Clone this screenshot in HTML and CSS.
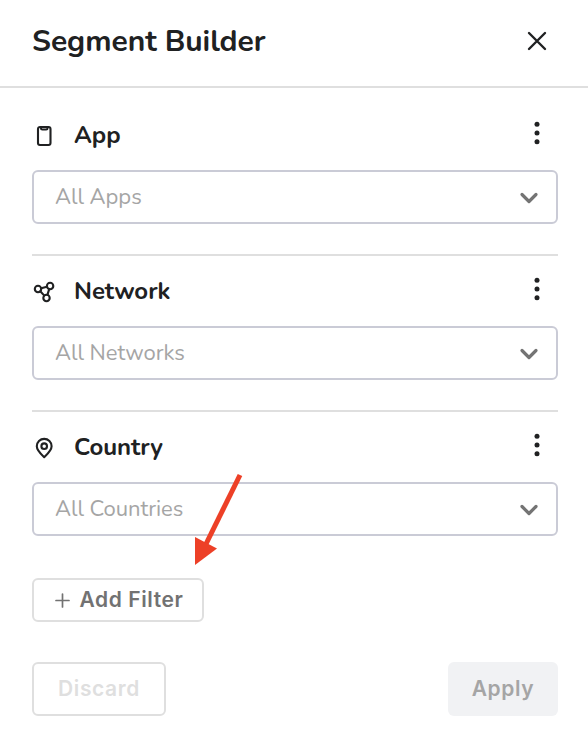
FILE: index.html
```html
<!DOCTYPE html>
<html lang="en">
<head>
<meta charset="utf-8">
<title>Segment Builder</title>
<link rel="stylesheet" href="styles.css">
</head>
<body>
<main class="panel">
  <header class="header">
    <h1 class="title">Segment Builder</h1>
    <svg class="close" width="22" height="22" viewBox="0 0 22 22"><path d="M3 3 19 19M19 3 3 19"/></svg>
  </header>
  <div class="filters">
    <section class="filter">
      <div class="filter-head">
        <svg class="icon" width="24" height="24" viewBox="0 0 24 24"><rect x="6" y="3" width="12.500" height="18" rx="2"/><path d="M9 3v1.200q0 1.300 1.300 1.300h3.900q1.300 0 1.300-1.300V3"/></svg>
        <h2 class="name">App</h2>
        <svg class="more" width="8" height="24" viewBox="0 0 8 24"><circle cx="4" cy="3.3" r="2.5"/><circle cx="4" cy="12" r="2.5"/><circle cx="4" cy="20.7" r="2.5"/></svg>
      </div>
      <div class="select"><span>All Apps</span><svg class="chevron" width="20" height="14" viewBox="0 0 20 14"><path d="m3 3.5 7 7 7-7"/></svg></div>
    </section>
    <section class="filter">
      <div class="filter-head">
        <svg class="icon" width="24" height="24" viewBox="0 0 24 24"><circle cx="6" cy="9" r="3.2"/><circle cx="18.1" cy="6" r="3.2"/><circle cx="14.5" cy="18" r="3.2"/><path d="m9.2 8.300 5.700-1.500M8.300 11.300l4 4.300M17.200 9.100l-1.800 5.800"/></svg>
        <h2 class="name">Network</h2>
        <svg class="more" width="8" height="24" viewBox="0 0 8 24"><circle cx="4" cy="3.3" r="2.5"/><circle cx="4" cy="12" r="2.5"/><circle cx="4" cy="20.7" r="2.5"/></svg>
      </div>
      <div class="select"><span>All Networks</span><svg class="chevron" width="20" height="14" viewBox="0 0 20 14"><path d="m3 3.5 7 7 7-7"/></svg></div>
    </section>
    <section class="filter">
      <div class="filter-head">
        <svg class="icon" width="24" height="24" viewBox="0 0 24 24"><path d="M12.2 21.2C9 18.2 4.8 14.5 4.8 10.300a7.400 7.400 0 0 1 14.800 0c0 4.200-4.200 7.900-7.400 10.900Z"/><circle cx="12.2" cy="10.2" r="2.8"/></svg>
        <h2 class="name">Country</h2>
        <svg class="more" width="8" height="24" viewBox="0 0 8 24"><circle cx="4" cy="3.3" r="2.5"/><circle cx="4" cy="12" r="2.5"/><circle cx="4" cy="20.7" r="2.5"/></svg>
      </div>
      <div class="select"><span>All Countries</span><svg class="chevron" width="20" height="14" viewBox="0 0 20 14"><path d="m3 3.5 7 7 7-7"/></svg></div>
    </section>
  </div>
  <button class="button add"><svg class="plus" width="16" height="16" viewBox="0 0 16 16"><path d="M2 7.500h13M8.500 1v13"/></svg><span>Add Filter</span></button>
  <footer class="actions">
    <button class="button discard">Discard</button>
    <button class="button apply">Apply</button>
  </footer>
  <svg class="arrow" width="50" height="94" viewBox="0 0 50 94"><path class="shaft" d="M46 2 12 71"/><path class="tip" d="M1 64v28l22-16.500Z"/></svg>
</main>
</body>
</html>
```
FILE: styles.css
```css
* { box-sizing: border-box; }
body { margin: 0; background: #fff; color: #202122; font-family: Nunito, "Open Sans", sans-serif; }
svg { display: block; flex: none; fill: none; stroke-linecap: round; stroke-linejoin: round; }
.panel { position: relative; width: 588px; height: 732px; overflow: hidden; }
.header { display: flex; align-items: center; justify-content: space-between; height: 88px; padding: 0 40px 4px 32px; border-bottom: 2px solid #dfdfdf; }
.title { margin: 2px 0 0; font-size: 30px; line-height: 40px; font-weight: 700; letter-spacing: -0.05px; }
.close { stroke: #202122; stroke-width: 2.4; }
.filters { padding: 0 30px 0 32px; }
.filter { height: 156px; border-bottom: 2px solid #dfdfdf; }
.filter:first-child { height: 168px; padding-top: 12px; }
.filter:last-child { height: 124px; border: 0; }
.filter-head { display: flex; align-items: center; height: 70px; }
.icon { margin-top: 2px; stroke: #202122; stroke-width: 2.1; }
.name { flex: 1; margin: 0 0 0 18px; font-size: 24px; line-height: 32px; font-weight: 700; letter-spacing: -0.05px; }
.more { margin: 0 17px 4px 0; fill: #202122; }
.select { display: flex; align-items: center; justify-content: space-between; height: 54px; padding: 0 17px 0 21px; border: 2px solid #cacbd6; border-radius: 6px; color: #a5a5a5; font-size: 22px; line-height: 30px; font-weight: 400; letter-spacing: -0.04px; }
.chevron { margin-top: 1px; stroke: #747474; stroke-width: 3.2; }
.button { display: flex; align-items: center; justify-content: center; margin: 0; padding: 0; border: 2px solid #dfdfdf; border-radius: 6px; background: #fff; font: 600 21px/28px Inter, sans-serif; letter-spacing: 0.6px; }
.add { width: 172px; height: 44px; margin: 42px 0 0 32px; padding-left: 2px; gap: 9px; color: #727272; }
.plus { margin-top: 1px; stroke: #727272; stroke-width: 1.7; }
.actions { display: flex; justify-content: space-between; padding: 40px 30px 0 32px; }
.discard { width: 134px; height: 54px; color: #dfdfdf; }
.apply { width: 110px; height: 54px; border: 0; background: #f1f2f4; color: #a5a5a5; }
.arrow { position: absolute; left: 194px; top: 473px; }
.shaft { stroke: #ed4027; stroke-width: 5; stroke-linecap: butt; }
.tip { fill: #ed4027; }
```
